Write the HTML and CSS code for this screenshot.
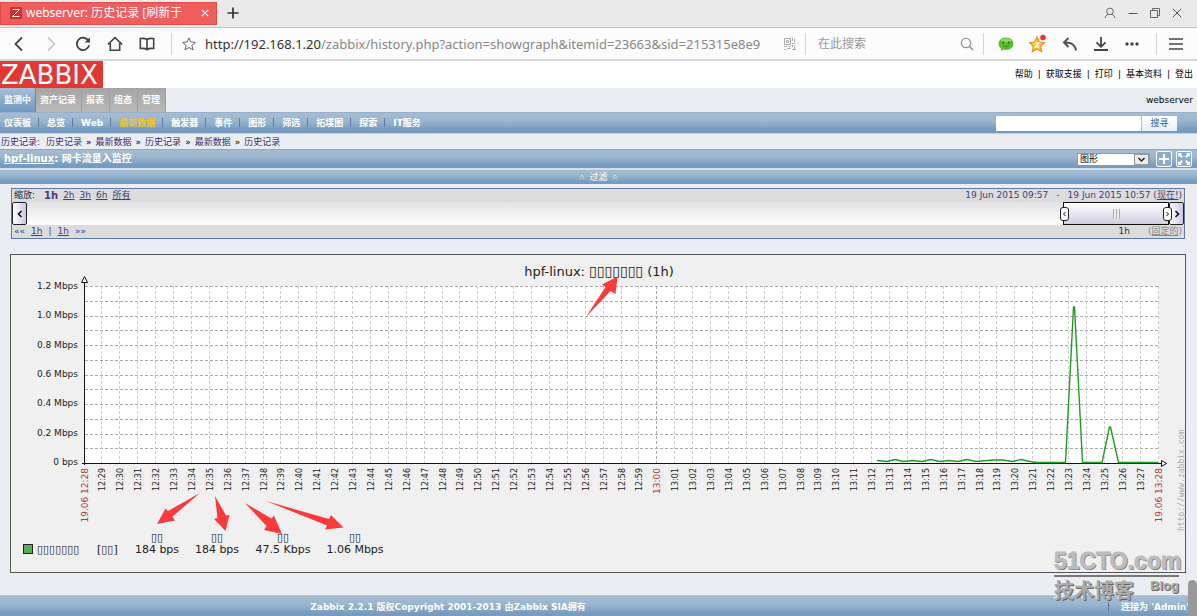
FILE: index.html
```html
<!DOCTYPE html>
<html lang="zh-CN">
<head>
<meta charset="utf-8">
<title>webserver: 历史记录</title>
<link rel="stylesheet" href="styles.css">
</head>
<body>
<header class="browser">
  <div class="tabbar">
    <div class="tab">
      <svg class="tab-icon" width="12" height="12" viewBox="0 0 12 12"><rect width="12" height="12" fill="#d92b2b"/><path d="M2.5 2.5h7L2.5 9.5h7" fill="none" stroke="#fff" stroke-width="1"/></svg>
      <span class="tab-title">webserver: 历史记录 [刷新于</span>
      <button class="icon-btn" aria-label="关闭标签"><svg width="8" height="8" viewBox="0 0 8 8"><path d="M.8.8l6.4 6.4M7.2.8L.8 7.2" stroke="#fff" stroke-width="1.2"/></svg></button>
    </div>
    <button class="icon-btn new-tab" aria-label="新标签"><svg width="12" height="12" viewBox="0 0 12 12"><path d="M6 .5v11M.5 6h11" stroke="#333" stroke-width="1.7"/></svg></button>
    <div class="window-controls">
      <button class="icon-btn" aria-label="用户"><svg width="12" height="12" viewBox="0 0 12 12"><circle cx="6" cy="4.4" r="3.3" fill="none" stroke="#666"/><path d="M4.3 7.3C2.4 8 1.3 9 1.1 11M7.7 7.3c1.9.7 3 1.7 3.2 3.7" fill="none" stroke="#666"/></svg></button>
      <button class="icon-btn" aria-label="最小化"><svg width="10" height="12" viewBox="0 0 10 12"><path d="M.5 6.5h9" stroke="#555"/></svg></button>
      <button class="icon-btn" aria-label="还原"><svg width="10" height="10" viewBox="0 0 10 10"><path d="M.5 2.5h7v7h-7zM2.5 2.5v-2h7v7h-2" fill="none" stroke="#666"/></svg></button>
      <button class="icon-btn" aria-label="关闭"><svg width="10" height="10" viewBox="0 0 10 10"><path d="M.7.7l8.6 8.6M9.3.7L.7 9.3" stroke="#555"/></svg></button>
    </div>
  </div>
  <div class="toolbar">
    <div class="tools">
      <button class="icon-btn" aria-label="后退"><svg width="16" height="16" viewBox="0 0 16 16"><path d="M11 1.5L4.5 8l6.5 6.5" fill="none" stroke="#444" stroke-width="1.8"/></svg></button>
      <button class="icon-btn" aria-label="前进"><svg width="16" height="16" viewBox="0 0 16 16"><path d="M5 1.5L11.5 8 5 14.5" fill="none" stroke="#ccc" stroke-width="1.8"/></svg></button>
      <button class="icon-btn" aria-label="刷新"><svg width="16" height="16" viewBox="0 0 16 16"><path d="M13.3 4.6A6.2 6.2 0 1 0 14.1 9.3" fill="none" stroke="#444" stroke-width="1.8"/><path d="M15 1.3v5.2H9.6z" fill="#444"/></svg></button>
      <button class="icon-btn" aria-label="主页"><svg width="16" height="16" viewBox="0 0 16 16"><path d="M.8 8.5L8 1.6l7.2 6.9M3.3 7v7.2h9.4V7" fill="none" stroke="#444" stroke-width="1.6"/></svg></button>
      <button class="icon-btn" aria-label="收藏夹"><svg width="16" height="16" viewBox="0 0 16 16"><path d="M8 3.5C6 2 4 2.3 1.3 2.5v10C4 12.3 6 12 8 13.7c2-1.7 4-1.4 6.7-1.2v-10C12 2.3 10 2 8 3.5v10" fill="none" stroke="#444" stroke-width="1.6"/></svg></button>
    </div>
    <span class="rule"></span>
    <button class="icon-btn star" aria-label="收藏"><svg width="14" height="14" viewBox="0 0 14 14"><path d="M7 .8l1.8 4.200 4.600.4-3.500 3 1.100 4.500L7 10.500l-4 2.400 1.100-4.500L.6 5.400 5.200 5z" fill="none" stroke="#666"/></svg></button>
    <div class="url"><span class="host">http://192.168.1.20</span>/zabbix/history.php?action=showgraph&amp;itemid=23663&amp;sid=215315e8e9</div>
    <svg class="qr" width="12" height="12" viewBox="0 0 12 12"><path d="M.5.5h6v6h-6zM2.500 2.500h2v2h-2zM8.500 0v3M10.500 1v3M8 5.500h3M0 8.500h3M4.500 8.500h2M8.500 7v2M11 7.500H10M0 11.500h2M3.500 10.500h3M8 11.500h4M10.500 9v2" fill="none" stroke="#aaa"/></svg>
    <span class="rule"></span>
    <input class="find" type="text" placeholder="在此搜索" aria-label="在此搜索">
    <button class="icon-btn" aria-label="搜索"><svg width="14" height="14" viewBox="0 0 14 14"><circle cx="6" cy="6" r="4.6" fill="none" stroke="#999" stroke-width="1.4"/><path d="M9.4 9.4l3.6 3.6" stroke="#999" stroke-width="1.6"/></svg></button>
    <span class="rule rule-find"></span>
    <div class="extras">
      <button class="icon-btn" aria-label="微信"><svg width="16" height="16" viewBox="0 0 16 16"><path d="M8 1.500C3.600 1.500.6 4.300.6 7.800c0 2 1 3.700 2.500 4.800L2.800 15l2.800-1.400c5 1.200 9.800-1.300 9.800-5.800 0-3.500-3-6.300-7.400-6.300z" fill="#58bd2c"/><ellipse cx="8" cy="4.600" rx="5" ry="2" fill="#8bdc55"/><circle cx="5.300" cy="6.500" r="1" fill="#17640b"/><circle cx="10.700" cy="6.500" r="1" fill="#17640b"/><path d="M5 9.500q3 2 6 0" fill="none" stroke="#328f19"/></svg></button>
      <button class="icon-btn" aria-label="空间"><svg width="18" height="20" viewBox="0 0 18 20"><path d="M8 3l2.300 5 5.200.6-3.900 3.600 1.100 5.300L8 14.900l-4.700 2.600 1.100-5.300L.5 8.600 5.700 8z" fill="#ffc43b" stroke="#e9951b" stroke-width="1.200"/><path d="M5.800 9h4.400l-4 4h4" fill="none" stroke="#fff" stroke-width="1.200"/><circle cx="14" cy="3.500" r="2.800" fill="#ed3434"/></svg></button>
      <button class="icon-btn" aria-label="撤销"><svg width="16" height="16" viewBox="0 0 16 16"><path d="M6.500 2L2 6.500 6.500 11M2 6.500c6-.5 11 1.500 12 8" fill="none" stroke="#555" stroke-width="2"/></svg></button>
      <button class="icon-btn" aria-label="下载"><svg width="16" height="16" viewBox="0 0 16 16"><path d="M8 1v9.500M3.500 6.300L8 10.800l4.500-4.500M1 14h14" fill="none" stroke="#444" stroke-width="1.8"/></svg></button>
      <button class="icon-btn" aria-label="更多"><svg width="16" height="16" viewBox="0 0 16 16"><g fill="#444"><circle cx="3" cy="8" r="1.7"/><circle cx="8" cy="8" r="1.7"/><circle cx="13" cy="8" r="1.7"/></g></svg></button>
    </div>
    <span class="rule"></span>
    <button class="icon-btn menu" aria-label="菜单"><svg width="14" height="14" viewBox="0 0 14 14"><path d="M0 2h14M0 7h14M0 12h14" stroke="#444" stroke-width="1.7"/></svg></button>
  </div>
</header>

<main class="page">
  <div class="masthead">
    <a class="logo" href="#">ZABBIX</a>
    <nav class="top-links"><a href="#">帮助</a>|<a href="#">获取支援</a>|<a href="#">打印</a>|<a href="#">基本资料</a>|<a href="#">登出</a></nav>
  </div>
  <div class="main-menu">
    <a class="active" href="#">监测中</a><a href="#">资产记录</a><a href="#">报表</a><a href="#">组态</a><a href="#">管理</a>
    <span class="server">webserver</span>
  </div>
  <div class="sub-menu">
    <nav class="sub-links"><a href="#">仪表板</a><a href="#">总览</a><a href="#">Web</a><a class="current" href="#">最新数据</a><a href="#">触发器</a><a href="#">事件</a><a href="#">图形</a><a href="#">筛选</a><a href="#">拓墣图</a><a href="#">探索</a><a href="#">IT服务</a></nav>
    <form class="search"><input type="text" aria-label="搜寻"><button type="button">搜寻</button></form>
  </div>
  <nav class="crumbs"><b>历史记录:</b><a href="#">历史记录</a><i>»</i><a href="#">最新数据</a><i>»</i><a href="#">历史记录</a><i>»</i><a href="#">最新数据</a><i>»</i><a href="#">历史记录</a></nav>
  <div class="title-bar">
    <h1><a href="#">hpf-linux</a>: 网卡流量入监控</h1>
    <span class="picker">
      <select aria-label="视图"><option>图形</option></select>
      <svg width="15" height="11" viewBox="0 0 15 11"><rect x=".5" y=".5" width="14" height="10" fill="#ececec" stroke="#999"/><path d="M4.500 4l3 3 3-3" fill="none" stroke="#222" stroke-width="1.500"/></svg>
    </span>
    <button class="square" aria-label="加入收藏"><svg width="14" height="14" viewBox="0 0 14 14"><path d="M7 2v10M2 7h10" stroke="#fff" stroke-width="2"/></svg></button>
    <button class="square" aria-label="全屏"><svg width="14" height="14" viewBox="0 0 14 14"><path d="M1 5V1h4L3.800 2.200 6 4.400 4.400 6 2.200 3.800zM13 5V1H9l1.200 1.200L8 4.400 9.600 6l2.200-2.200zM1 9v4h4l-1.200-1.200L6 9.600 4.400 8l-2.200 2.200zM13 9v4H9l1.200-1.200L8 9.600 9.600 8l2.200 2.200z" fill="#fff"/></svg></button>
  </div>
  <button class="filter-bar">
    <svg width="6" height="6" viewBox="0 0 6 6"><path d="M1 3l2-2 2 2M1 5.500l2-2 2 2" fill="none" stroke="#dde7f0" stroke-width=".8"/></svg>
    过滤
    <svg width="6" height="6" viewBox="0 0 6 6"><path d="M1 3l2-2 2 2M1 5.500l2-2 2 2" fill="none" stroke="#dde7f0" stroke-width=".8"/></svg>
  </button>

  <section class="timeline">
    <div class="timeline-row">
      <div class="zooms"><b>缩放:</b><a class="chosen" href="#">1h</a><a href="#">2h</a><a href="#">3h</a><a href="#">6h</a><a href="#">所有</a></div>
      <div class="dates"><span>19 Jun 2015 09:57</span><span>-</span><span>19 Jun 2015 10:57 (<a href="#">现在!</a>)</span></div>
    </div>
    <div class="track">
      <button class="arrow" aria-label="向左"><svg width="8" height="8" viewBox="0 0 8 8"><path d="M5.500 1l-3 3 3 3" fill="none" stroke="#111" stroke-width="1.600"/></svg></button>
      <span class="rail"></span>
      <div class="thumb">
        <span class="grip"><svg width="5" height="8" viewBox="0 0 5 8"><path d="M3.500 2l-2 2 2 2" fill="none" stroke="#111"/></svg></span>
        <span class="ridges"></span>
        <span class="grip"><svg width="5" height="8" viewBox="0 0 5 8"><path d="M1.500 2l2 2-2 2" fill="none" stroke="#111"/></svg></span>
      </div>
      <button class="arrow" aria-label="向右"><svg width="8" height="8" viewBox="0 0 8 8"><path d="M2.500 1l3 3-3 3" fill="none" stroke="#111" stroke-width="1.600"/></svg></button>
    </div>
    <div class="timeline-row">
      <div class="steps"><span>««</span><a href="#">1h</a><span>|</span><a href="#">1h</a><span>»»</span></div>
      <div class="period"><span>1h</span><span class="fixed">(<a href="#">固定的</a>)</span></div>
    </div>
  </section>

  <svg class="chart" viewBox="0 0 1176 319" role="img" aria-label="hpf-linux (1h)">
    <rect x=".5" y=".5" width="1175" height="318" fill="#f0f0f0" stroke="#555"/>
    <rect x="75" y="32" width="1074" height="177" fill="#fff"/>
    <g id="grid"></g>
    <path d="M74.500 27v184M72 209.500h1080" class="axis"/>
    <path d="M71.500 28.500h6l-3-6zM1151.500 206.500v6l5-3z" class="arrowhead"/>
    <path class="series" d="M867 206.500L877 207.500 885 205.500 893 207.500 903 206.500 912 207.500 921 205.500 930 207.500 939 206.500 948 207.500 957 205.500 966 207.500 983 206H993L1002 207.500 1011 205.500 1020 207.500 1027 208.500H1055.500L1063.500 53h1L1072.500 208.500H1092L1099.500 173h1L1108.500 208.500H1148"/>
    <text x="589" y="22" class="chart-title">hpf-linux: <tspan class="boxes">▯▯▯▯▯▯▯</tspan> (1h)</text>
    <g id="ylabels"></g>
    <g id="xlabels"></g>
    <text transform="translate(1174 277) rotate(-90)" class="credit">http://www.zabbix.com</text>
    <rect x="13.500" y="290.500" width="9" height="9" fill="#55b055" stroke="#222"/>
    <g class="legend">
      <text x="27" y="299">▯▯▯▯▯▯▯</text><text x="87" y="299">[▯▯]</text>
      <g class="mid">
        <text x="147" y="287">▯▯</text><text x="147" y="299">184 bps</text>
        <text x="207" y="287">▯▯</text><text x="207" y="299">184 bps</text>
        <text x="273" y="287">▯▯</text><text x="273" y="299">47.5 Kbps</text>
        <text x="345" y="287">▯▯</text><text x="345" y="299">1.06 Mbps</text>
      </g>
    </g>
    <g class="pointers">
      <path d="M575.500 63.500L595.500 33 592 30.500 607.500 22.500 605.500 40 600.500 37z"/>
      <path d="M190 239L158 257 155.500 254.500 147 270 165 266.500 162.500 262.500z"/>
      <path d="M205 242L207.500 264 204 265 215.500 277 219.500 261 216 261.500z"/>
      <path d="M235 249L256.500 272 254 276 272 280 264 261.500 261.500 264.500z"/>
      <path d="M256 247L317 271.500 315 275.500 333.500 273.500 321 261 319 265z"/>
    </g>
  </svg>

  <footer class="footer">
    <span class="copyright">Zabbix 2.2.1 版权Copyright 2001-2013 由Zabbix SIA拥有</span>
    <span class="user">连接为 'Admin'</span>
  </footer>

  <div class="watermark"><strong>51CTO.com</strong><div><span>技术博客</span><em>Blog</em></div></div>
  <span class="scroll-thumb"></span>
</main>
<script src="chart.js"></script>
</body>
</html>
```
FILE: chart.js
```javascript
const NS = "http://www.w3.org/2000/svg";
const left = 74.5, right = 1148.5, top0 = 32, bottom = 209;

function add(parent, tag, attrs, text) {
  const el = document.createElementNS(NS, tag);
  for (const key in attrs) el.setAttribute(key, attrs[key]);
  if (text) el.textContent = text;
  document.getElementById(parent).appendChild(el);
}

for (let i = 0; i < 12; i++) {
  const y = Math.round(top0 + i * (bottom - top0) / 12) + 0.5;
  add("grid", "path", { d: `M75 ${y}H1149`, class: "grid-h" });
}

["1.2 Mbps", "1.0 Mbps", "0.8 Mbps", "0.6 Mbps", "0.4 Mbps", "0.2 Mbps", "0 bps"].forEach((label, i) => {
  add("ylabels", "text", { x: 68, y: Math.round(35 + i * 29.3) }, label);
});

for (let m = 0; m <= 60; m++) {
  const x = Math.round(left + m * (right - left) / 60);
  if (m > 0) add("grid", "path", { d: `M${x - 0.5} 32V209`, class: m === 32 ? "grid-v hour" : "grid-v" });
  const minute = 28 + m;
  const time = `${12 + Math.floor(minute / 60)}:${String(minute % 60).padStart(2, "0")}`;
  const edge = m === 0 || m === 60;
  const major = edge || m === 32;
  add("xlabels", "text", {
    transform: `translate(${x + 3} 214) rotate(-90)`,
    class: major ? "major" : "minor"
  }, edge ? `19.06 ${time}` : time);
}
```
FILE: styles.css
```css
* { box-sizing: border-box; }
body {
  margin: 0;
  background: #eaeef2;
  font: 9px/12px "DejaVu Sans", "Noto Sans CJK SC", sans-serif;
  color: #000;
}
a { color: inherit; }
button, input, select { font: inherit; }
svg { display: block; flex: none; }
.icon-btn { padding: 0; border: 0; background: none; display: block; flex: none; }

.browser { font-family: "Noto Sans", "Noto Sans CJK SC", sans-serif; }
.tabbar { display: flex; align-items: center; height: 28px; padding-bottom: 1px; background: #eaeaea; border-bottom: 1px solid #c4c4c4; }
.tab {
  display: flex; align-items: center; gap: 4px; width: 217px; height: 23px;
  padding: 0 7px 0 9px; background: #ef5d5d; border: 1px solid #e04c4c; color: #fff;
}
.tab-title { flex: 1; font-size: 12px; line-height: 20px; white-space: nowrap; }
.new-tab { margin-left: 10px; }
.window-controls { display: flex; align-items: center; gap: 12px; margin-left: auto; padding-right: 15px; }

.toolbar { display: flex; align-items: center; height: 33px; padding: 0 14px 0 11px; background: #fcfcfc; border-bottom: 2px solid #d6d6d6; }
.tools { display: flex; align-items: center; gap: 16px; }
.extras { display: flex; align-items: center; gap: 15px; }
.rule { flex: none; width: 1px; height: 22px; background: #d4d4d4; margin: 0 12px 0 16px; }
.star { margin-right: 9px; margin-left: -2px; }
.url { flex: 1; font-size: 13px; line-height: 20px; color: #888; white-space: nowrap; }
.host { color: #333; }
.find { width: 142px; border: 0; padding: 0; background: none; font-size: 12px; outline: 0; }
.find::placeholder { color: #999; }
.qr + .rule { margin: 0 12px 0 9px; }
.rule-find { margin: 0 14px 0 9px; }

.page { position: relative; }
.masthead { display: flex; justify-content: space-between; height: 27px; background: #fff; }
.logo { width: 103px; padding-left: 1px; background: #e33734; color: #fff; font-size: 26px; line-height: 28px; text-decoration: none; }
.top-links { display: flex; gap: 5px; padding: 7px 4px 0 0; }
.top-links a, .main-menu a, .sub-menu a, .crumbs a { text-decoration: none; }
.main-menu { display: flex; height: 24px; line-height: 24px; }
.main-menu a { padding: 0 5px 0 4px; background: linear-gradient(#a5a5a5, #b8b8b8); border-right: 1px solid #a0a0a0; color: #fff; font-weight: bold; }
.main-menu .active { padding-right: 4px; background: linear-gradient(#a5bfd7, #7099c0); border-color: #5e8ab5; }
.server { margin-left: auto; padding-right: 4px; }

.sub-menu, .title-bar, .filter-bar, .footer { background: linear-gradient(#a5bdd3, #9ab5ce 40%, #759bc0 85%); color: #fff; font-weight: bold; }
.sub-menu { display: flex; justify-content: space-between; align-items: center; height: 22px; padding: 0 20px 0 4px; border-top: 1px solid #98b1c8; border-bottom: 1px solid #c0d0df; }
.sub-links { display: flex; }
.sub-links a + a::before { content: ""; display: inline-block; width: 1px; height: 9px; margin: 0 8px 0 7px; background: #6675a5; vertical-align: -1px; }
.sub-links .current { color: #f2c522; }
.search { display: flex; height: 15px; }
.search input { width: 145px; border: 0; padding: 0 2px; background: #fff; }
.search button { width: 36px; padding: 0; border: 0; border-left: 1px solid #a8c2db; background: linear-gradient(#fff, #e6eef6); color: #2d6395; font-weight: normal; }

.crumbs { display: flex; gap: 4px; height: 15px; padding-left: 1px; line-height: 16px; color: #3a3070; }
.crumbs b { margin-right: 2px; font-weight: normal; }
.crumbs i { color: #000; font-style: normal; }
.title-bar { display: flex; align-items: center; gap: 4px; height: 19px; padding: 0 5px 0 4px; border-top: 1px solid #91aac2; }
.title-bar h1 { flex: 1; margin: 0; font-size: 10px; line-height: 16px; }
.picker { display: grid; align-items: center; justify-items: end; margin-right: 2px; }
.picker select, .picker svg { grid-area: 1 / 1; }
.picker svg { margin-right: 1px; pointer-events: none; }
.picker select { width: 73px; height: 13px; padding: 0 2px; border: 1px solid #999; border-radius: 0; background: #fff; color: #000; font-size: 9px; font-weight: normal; line-height: 11px; appearance: none; }
.square { width: 16px; height: 16px; padding: 0; border: 1px solid #fff; border-radius: 2px; background: #8caccc; }
.filter-bar { display: flex; justify-content: center; align-items: center; gap: 4px; width: 100%; height: 16px; padding: 0; border: 0; border-top: 2px solid #d4dfe9; font-weight: normal; }

.timeline { margin: 4px 12px 0 11px; border: 1px solid #5d7ba6; background: #dcdcdc; color: #463c7e; }
.timeline-row { display: flex; justify-content: space-between; height: 13px; padding: 0 2px; line-height: 13px; }
.zooms { display: flex; gap: 5px; }
.zooms b { margin-right: 4px; font-weight: normal; color: #222; }
.chosen { font-weight: bold; text-decoration: none; font-size: 10px; }
.steps { display: flex; gap: 6px; }
.dates { display: flex; gap: 8px; }
.period { display: flex; gap: 18px; color: #333; }
.fixed { color: #888; }
.track { display: flex; height: 23px; background: linear-gradient(#e2e2e4, #fff); }
.arrow { width: 15px; padding: 0 3px; border: 1px solid #222; border-radius: 2px; background: linear-gradient(90deg, #fff, #c9c9dc); }
.rail { flex: 1; }
.thumb { display: flex; align-items: center; justify-content: space-between; width: 106px; border: 1px solid #111; background: linear-gradient(#fff, #cfcfe0); }
.grip { padding: 2px 1px; margin: 0 -4px; border: 1px solid #222; border-radius: 3px; background: #fff; position: relative; z-index: 1; }
.ridges { width: 7px; height: 10px; background: repeating-linear-gradient(90deg, #aaa 0 1px, #eee 1px 3px); }

.chart { width: calc(100% - 21px); height: auto; margin: 15px 11px 22px 10px; font-family: "DejaVu Sans", sans-serif; fill: #222; }
.grid-h { stroke: #aaa; stroke-dasharray: 3 2; }
.grid-v { stroke: #ccc; stroke-dasharray: 3 2; }
.hour { stroke: #aaa; }
.axis { stroke: #111; }
.arrowhead { fill: #fff; stroke: #111; }
.series { fill: none; stroke: #1f9f1f; stroke-width: 1.4; stroke-linejoin: round; }
.chart-title { font-size: 13px; text-anchor: middle; }
.boxes { font-size: 14px; }
#ylabels { font-size: 9px; text-anchor: end; }
#xlabels { text-anchor: end; }
.minor { font-size: 8px; }
.major { font-size: 9px; fill: #b03a3a; }
.credit { font: 8px "DejaVu Sans Mono", monospace; fill: #aaa; }
.legend { font-size: 11px; }
.mid { text-anchor: middle; }
.pointers { fill: #fb3b3b; }

.footer { display: flex; height: 22px; padding: 0 8px 0 0; line-height: 22px; border-top: 1px solid #b4c6d7; }
.copyright { flex: 1; padding-right: 212px; text-align: center; }
.user::before { content: ""; display: inline-block; width: 1px; height: 9px; margin-right: 12px; background: #5d7298; vertical-align: -1px; }

.watermark { position: absolute; right: 18px; bottom: 16px; width: 125px; color: #bcbcbc; text-shadow: 1px 1px 0 #666, -1px -1px 0 #eee; }
.watermark strong { display: block; height: 31px; border-bottom: 2px solid #777; font: bold 23px/30px "Liberation Sans", sans-serif; -webkit-text-stroke: 1px #bcbcbc; white-space: nowrap; }
.watermark div { display: flex; justify-content: space-between; height: 24px; font: bold 20px/26px "Noto Sans CJK SC", sans-serif; color: #aaa; }
.watermark em { font: bold 13px/18px "Liberation Sans", sans-serif; }
.scroll-thumb { position: absolute; right: 0; bottom: 0; width: 9px; height: 37px; border-radius: 5px 5px 0 0; background: #999; }
```
